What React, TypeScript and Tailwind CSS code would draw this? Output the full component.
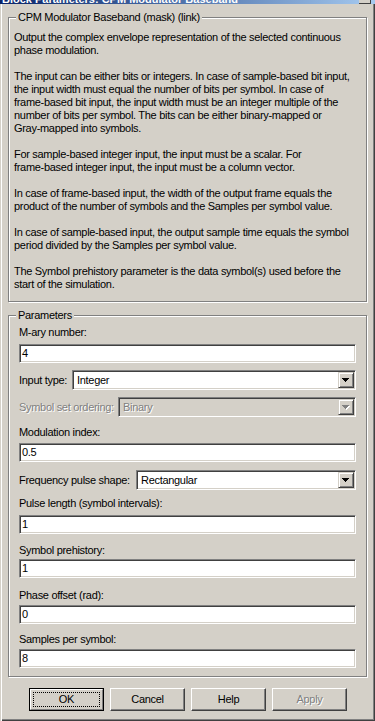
import React from "react";

const sunken =
  "border border-t-[#808080] border-l-[#808080] border-b-white border-r-white shadow-[inset_1px_1px_0_#404040,inset_-1px_-1px_0_#d4d0c8]";
const etched =
  "relative border border-[#808080] shadow-[1px_1px_0_#ffffff,inset_1px_1px_0_#ffffff]";
const disabledText = "text-[#808080] [text-shadow:1px_1px_0_#ffffff]";

function Arrow({ disabled }: { disabled?: boolean }) {
  const d = "M0 0H7V1H6V2H5V3H4V4H3V3H2V2H1V1H0Z";
  return (
    <svg width="8" height="5" viewBox="0 0 8 5" shapeRendering="crispEdges">
      {disabled ? (
        <>
          <path d={d} transform="translate(1 1)" fill="#ffffff" />
          <path d={d} fill="#808080" />
        </>
      ) : (
        <path d={d} fill="#000000" />
      )}
    </svg>
  );
}

function Label({ text, mt }: { text: string; mt: string }) {
  return <div className={`${mt} h-[13px] leading-[13px] whitespace-nowrap`}>{text}</div>;
}

function Field({ value, mt }: { value: string; mt: string }) {
  return (
    <div className={`${mt} h-[19px] bg-white ${sunken} flex items-center pl-[2px] leading-[13px]`}>
      {value}
    </div>
  );
}

function SelectRow({
  label,
  value,
  labelW,
  mt,
  disabled,
}: {
  label: string;
  value: string;
  labelW: string;
  mt: string;
  disabled?: boolean;
}) {
  return (
    <div className={`${mt} flex items-center h-[20px]`}>
      <div className={`${labelW} shrink-0 whitespace-nowrap leading-[13px] ${disabled ? disabledText : ""}`}>
        {label}
      </div>
      <div
        className={`flex-1 h-[20px] ${sunken} ${disabled ? "bg-[#d4d0c8]" : "bg-white"} flex p-[1px]`}
      >
        <div className={`flex-1 flex items-center pl-[3px] leading-[13px] ${disabled ? disabledText : ""}`}>
          {value}
        </div>
        <div className="w-[16px] h-full bg-[#d4d0c8] border border-t-[#d4d0c8] border-l-[#d4d0c8] border-r-[#404040] border-b-[#404040] shadow-[inset_1px_1px_0_#ffffff,inset_-1px_-1px_0_#808080] flex items-center justify-center">
          <Arrow disabled={disabled} />
        </div>
      </div>
    </div>
  );
}

function Btn({ text, disabled }: { text: string; disabled?: boolean }) {
  return (
    <div className="w-[75px] h-[23px] bg-[#d4d0c8] border border-t-white border-l-white border-r-[#404040] border-b-[#404040] shadow-[inset_-1px_-1px_0_#808080] flex items-center justify-center leading-[13px]">
      <span className={disabled ? disabledText : ""}>{text}</span>
    </div>
  );
}

const paragraphs: string[][] = [
  ["Output the complex envelope representation of the selected continuous", "phase modulation."],
  [
    "The input can be either bits or integers. In case of sample-based bit input,",
    "the input width must equal the number of bits per symbol. In case of",
    "frame-based bit input, the input width must be an integer multiple of the",
    "number of bits per symbol. The bits can be either binary-mapped or",
    "Gray-mapped into symbols.",
  ],
  [
    "For sample-based integer input, the input must be a scalar. For",
    "frame-based integer input, the input must be a column vector.",
  ],
  [
    "In case of frame-based input, the width of the output frame equals the",
    "product of the number of symbols and the Samples per symbol value.",
  ],
  [
    "In case of sample-based input, the output sample time equals the symbol",
    "period divided by the Samples per symbol value.",
  ],
  ["The Symbol prehistory parameter is the data symbol(s) used before the", "start of the simulation."],
];

export default function App() {
  return (
    <div
      className="w-[375px] h-[721px] bg-[#d4d0c8] flex flex-col overflow-hidden text-[11px] tracking-[-0.3px] text-black shadow-[inset_1px_0_0_#d4d0c8,inset_2px_0_0_#ffffff,inset_-1px_-1px_0_#404040,inset_-2px_-2px_0_#808080]"
      style={{ fontFamily: '"Liberation Sans", Arial, sans-serif' }}
    >
      {/* title bar (mostly cut off) */}
      <div className="h-[4px] shrink-0 overflow-hidden flex items-end bg-linear-to-r from-[#0a246a] to-[#a6caf0]">
        <div className="h-[10px] leading-[10px] shrink-0 pl-[2px] font-bold text-white whitespace-nowrap tracking-normal">
          Block Parameters: CPM Modulator Baseband
        </div>
        <div className="ml-auto mr-[4px] w-[12px] h-full shrink-0 bg-[#d4d0c8] border-b border-r border-[#404040]" />
      </div>

      <div className="px-[8px] pt-[13px] flex flex-col">
        {/* description group */}
        <div className={`${etched} pt-[13px] pb-[10px] pl-[5px]`}>
          <div className="absolute left-[7px] top-[-7px] px-[2px] bg-[#d4d0c8] h-[13px] leading-[13px] whitespace-nowrap">
            CPM Modulator Baseband (mask) (link)
          </div>
          {paragraphs.map((lines, i) => (
            <div key={i} className={i === 0 ? "" : "mt-[13px]"}>
              {lines.map((l, j) => (
                <div key={j} className="h-[13px] leading-[13px] whitespace-nowrap">
                  {l}
                </div>
              ))}
            </div>
          ))}
        </div>

        {/* parameters group */}
        <div className={`${etched} mt-[13px] pt-[10px] pb-[8px] px-[10px] flex flex-col`}>
          <div className="absolute left-[7px] top-[-7px] px-[2px] bg-[#d4d0c8] h-[13px] leading-[13px] whitespace-nowrap">
            Parameters
          </div>
          <Label text="M-ary number:" mt="mt-0" />
          <Field value="4" mt="mt-[5px]" />
          <SelectRow label="Input type:" value="Integer" labelW="w-[53px]" mt="mt-[7px]" />
          <SelectRow
            label="Symbol set ordering:"
            value="Binary"
            labelW="w-[99px]"
            mt="mt-[7px]"
            disabled
          />
          <Label text="Modulation index:" mt="mt-[9px]" />
          <Field value="0.5" mt="mt-[4px]" />
          <SelectRow label="Frequency pulse shape:" value="Rectangular" labelW="w-[117px]" mt="mt-[8px]" />
          <Label text="Pulse length (symbol intervals):" mt="mt-[7px]" />
          <Field value="1" mt="mt-[5px]" />
          <Label text="Symbol prehistory:" mt="mt-[10px]" />
          <Field value="1" mt="mt-[2px]" />
          <Label text="Phase offset (rad):" mt="mt-[11px]" />
          <Field value="0" mt="mt-[3px]" />
          <Label text="Samples per symbol:" mt="mt-[9px]" />
          <Field value="8" mt="mt-[3px]" />
        </div>

        {/* buttons */}
        <div className="mt-[11px] pl-[21px] flex gap-[6px]">
          <div className="w-[75px] h-[23px] border border-black bg-[#d4d0c8]">
            <div className="h-full border border-t-white border-l-white border-r-[#808080] border-b-[#808080] p-[2px]">
              <div className="h-full border border-dotted border-black flex items-center justify-center leading-[13px]">
                OK
              </div>
            </div>
          </div>
          <Btn text="Cancel" />
          <Btn text="Help" />
          <Btn text="Apply" disabled />
        </div>
      </div>
    </div>
  );
}
